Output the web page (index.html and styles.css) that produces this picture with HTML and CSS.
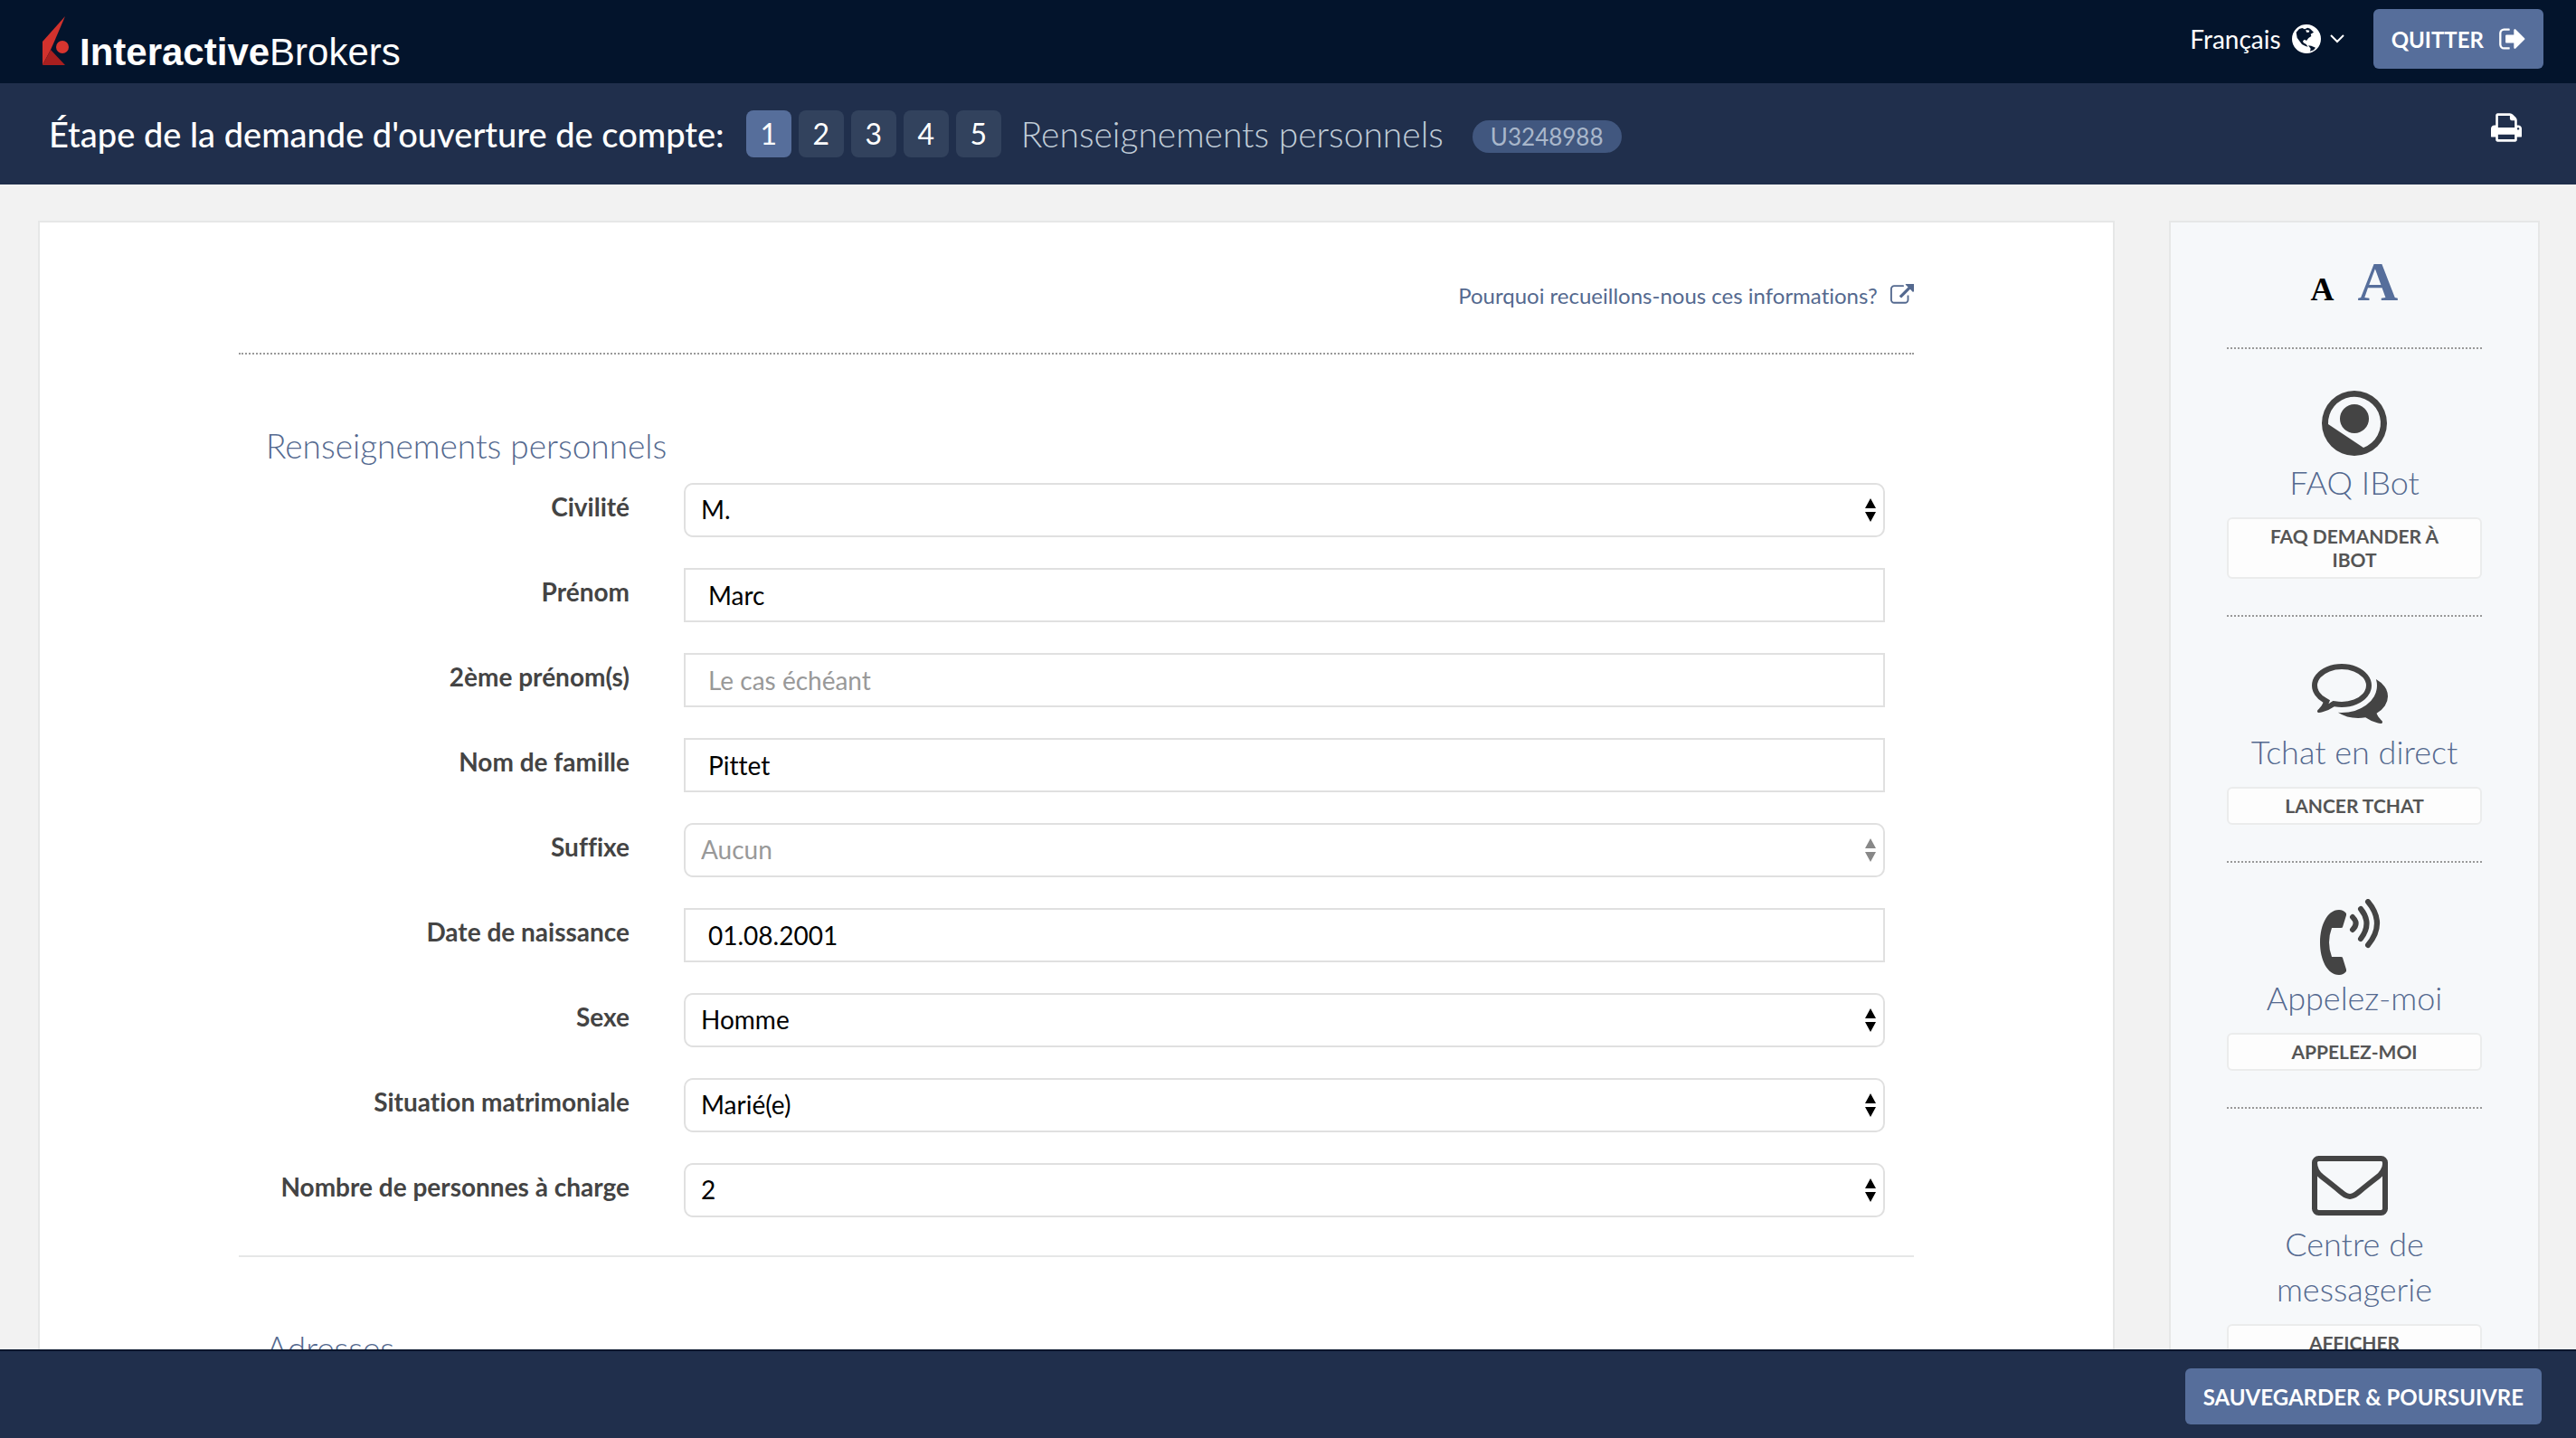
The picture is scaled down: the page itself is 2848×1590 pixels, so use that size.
FILE: index.html
```html
<!DOCTYPE html>
<html lang="fr">
  <head>
    <meta charset="UTF-8" />
    <meta name="viewport" content="width=device-width, initial-scale=1.0" />
    <title>Renseignements personnels - Interactive Brokers</title>
    <link rel="stylesheet" href="styles.css">
  </head>
  <body>
    <header class="topbar">
      <a class="logo" href="#">
        <svg class="logo-mark" viewBox="0 0 30 56" aria-hidden="true">
          <path fill="#d2322d" d="M26 1L1 29v26l9-17 4-9z" />
          <path fill="#a81f1f" d="M1 55l9-17 16 17z" />
          <circle fill="#d8352f" cx="23" cy="35" r="7" />
        </svg>
        <span><b>Interactive</b>Brokers</span>
      </a>
      <div class="topbar-right">
        <button class="language" type="button">
          Français
          <svg class="icon-globe" viewBox="0 0 96 96" aria-hidden="true">
            <path fill="currentColor" fill-rule="evenodd" d="M48 0a48 48 0 1 1 0 96a48 48 0 1 1 0-96zM14 26l10-11 10-3 8 4 10-5 8 3 12 12-10 6 2 7-9 6-7 9-6-4-6 5 2 6 9 5 6 8-8-2-12-6-9-12-7-10zM46 18l2 8 8 0 2-6zM54 70l10 1 14 6-6 8-12 4 2-9z" />
          </svg>
          <svg class="icon-chevron" viewBox="0 0 16 10" aria-hidden="true">
            <path fill="none" stroke="currentColor" stroke-width="2" d="M1 1l7 7 7-7" />
          </svg>
        </button>
        <button class="btn btn-quit" type="button">
          Quitter
          <svg class="icon-out" viewBox="0 256 1664 1280" aria-hidden="true">
            <path fill="currentColor" d="M704 1440q0 4 1 20t.5 26.500-3 23.500-10 19.500-20.500 6.500h-320q-119 0-203.500-84.500t-84.500-203.500v-704q0-119 84.500-203.500t203.500-84.500h320q13 0 22.500 9.500t9.500 22.500q0 4 1 20t.5 26.500-3 23.500-10 19.500-20.500 6.500h-320q-66 0-113 47t-47 113v704q0 66 47 113t113 47h312l11.500 1 11.500 3 8 5.500 7 9 2 13.500zm928-544q0 26-19 45l-544 544q-19 19-45 19t-45-19-19-45v-288h-448q-26 0-45-19t-19-45v-384q0-26 19-45t45-19h448v-288q0-26 19-45t45-19 45 19l544 544q19 19 19 45z" />
          </svg>
        </button>
      </div>
    </header>

    <div class="stepbar">
      <h1>Étape de la demande d'ouverture de compte:</h1>
      <ol class="steps">
        <li class="active">1</li>
        <li>2</li>
        <li>3</li>
        <li>4</li>
        <li>5</li>
      </ol>
      <span class="step-name">Renseignements personnels</span>
      <span class="badge">U3248988</span>
      <button class="print" type="button" aria-label="Imprimer">
        <svg class="icon-print" viewBox="64 128 1664 1536" aria-hidden="true">
          <path fill="currentColor" d="M448 1536h896v-256h-896v256zm0-640h896v-384h-160q-40 0-68-28t-28-68v-160h-640v640zm1152 64q0-26-19-45t-45-19-45 19-19 45 19 45 45 19 45-19 19-45zm128 0v416q0 13-9.500 22.500t-22.500 9.500h-224v160q0 40-28 68t-68 28h-960q-40 0-68-28t-28-68v-160h-224q-13 0-22.500-9.500t-9.500-22.500v-416q0-79 56.500-135.500t135.500-56.500h64v-544q0-40 28-68t68-28h672q40 0 88 20t76 48l152 152q28 28 48 76t20 88v256h64q79 0 135.500 56.500t56.500 135.500z" />
        </svg>
      </button>
    </div>

    <div class="page">
      <main class="card">
        <div class="why">
          <a href="#">
            Pourquoi recueillons-nous ces informations?
            <svg class="icon-external" viewBox="0 64 1792 1472" aria-hidden="true">
              <path fill="currentColor" d="M1408 928v320q0 119-84.500 203.500t-203.500 84.500h-832q-119 0-203.500-84.500t-84.500-203.500v-832q0-119 84.500-203.500t203.500-84.500h704q14 0 23 9t9 23v64q0 14-9 23t-23 9h-704q-66 0-113 47t-47 113v832q0 66 47 113t113 47h832q66 0 113-47t47-113v-320q0-14 9-23t23-9h64q14 0 23 9t9 23zm384-864v512q0 26-19 45t-45 19-45-19l-176-176-652 652q-10 10-23 10t-23-10l-114-114q-10-10-10-23t10-23l652-652-176-176q-19-19-19-45t19-45 45-19h512q26 0 45 19t19 45z" />
            </svg>
          </a>
        </div>

        <form id="application">
          <section class="form-section">
            <h2>Renseignements personnels</h2>
            <div class="row">
              <label for="title">Civilité</label>
              <select id="title"><option>M.</option></select>
            </div>
            <div class="row">
              <label for="first-name">Prénom</label>
              <input id="first-name" type="text" value="Marc" />
            </div>
            <div class="row">
              <label for="middle-name">2ème prénom(s)</label>
              <input id="middle-name" type="text" placeholder="Le cas échéant" />
            </div>
            <div class="row">
              <label for="last-name">Nom de famille</label>
              <input id="last-name" type="text" value="Pittet" />
            </div>
            <div class="row">
              <label for="suffix">Suffixe</label>
              <select id="suffix" class="empty"><option>Aucun</option></select>
            </div>
            <div class="row">
              <label for="birth-date">Date de naissance</label>
              <input id="birth-date" type="text" value="01.08.2001" />
            </div>
            <div class="row">
              <label for="gender">Sexe</label>
              <select id="gender"><option>Homme</option></select>
            </div>
            <div class="row">
              <label for="marital-status">Situation matrimoniale</label>
              <select id="marital-status"><option>Marié(e)</option></select>
            </div>
            <div class="row">
              <label for="dependents">Nombre de personnes à charge</label>
              <select id="dependents"><option>2</option></select>
            </div>
          </section>

          <section class="form-section">
            <h2>Adresses</h2>
          </section>
        </form>
      </main>

      <aside class="sidebar">
        <div class="text-size">
          <button class="size-small" type="button" aria-label="Texte normal">A</button>
          <button class="size-large" type="button" aria-label="Texte agrandi">A</button>
        </div>

        <section class="help">
          <svg class="icon-bot" viewBox="0 0 84 82" aria-hidden="true">
            <path fill="currentColor" fill-rule="evenodd" d="M42 6a36 36 0 1 1 0 72a36 36 0 1 1 0-72zM13 43L52 69A29 29 0 1 0 13 43z" />
            <circle fill="currentColor" cx="42" cy="37" r="16" />
          </svg>
          <h3>FAQ IBot</h3>
          <button class="btn-help" type="button">FAQ demander à IBot</button>
        </section>

        <section class="help">
          <svg class="icon-help" viewBox="0 0 1792 1792" aria-hidden="true">
            <path fill="currentColor" d="M704 384q-153 0-286 52t-211.500 141-78.500 191q0 82 53 158t149 132l97 56-35 84q34-20 62-39l44-31 53 10q78 14 153 14 153 0 286-52t211.500-141 78.500-191-78.500-191-211.500-141-286-52zm0-128q191 0 353.500 68.500t256.500 186.500 94 257-94 257-256.500 186.500-353.500 68.500q-86 0-176-16-124 88-278 128-36 9-86 16h-3q-11 0-20.500-8t-11.500-21q-1-3-1-6.500t.5-6.500 2-6l2.500-5 3.500-5.500 4-5 4.500-5 4-4.500q5-6 23-25t26-29.500 22.500-29 25-38.500 20.500-44q-124-72-195-177t-71-224q0-139 94-257t256.500-186.500 353.500-68.500zm822 1169q10 24 20.500 44t25 38.500 22.500 29 26 29.500 23 25q1 1 4 4.500t4.500 5 4 5 3.500 5.500l2.500 5 2 6 .5 6.500-1 6.500q-3 14-13 22t-22 7q-50-7-86-16-154-40-278-128-90 16-176 16-271 0-472-132 58 4 88 4 161 0 309-45t264-129q125-92 192-212t67-254q0-77-23-152 129 71 204 178t75 230q0 120-71 224.500t-195 176.500z" />
          </svg>
          <h3>Tchat en direct</h3>
          <button class="btn-help" type="button">Lancer Tchat</button>
        </section>

        <section class="help">
          <svg class="icon-help" viewBox="0 0 84 84" aria-hidden="true">
            <path fill="currentColor" d="M30 12q5 0 8 4l0 2-4 13q0 1-2 1l-10 0q-3 8-3 16t3 16l10 0q2 0 2 1l4 13 0 2q-3 4-8 4C17 84 9 67 9 48s8-36 21-36z" />
            <path fill="none" stroke="currentColor" stroke-width="6" stroke-linecap="round" d="M45 20q7 7 0 14M54 11q13 16 0 33M62 3q20 24 0 48" />
          </svg>
          <h3>Appelez-moi</h3>
          <button class="btn-help" type="button">Appelez-moi</button>
        </section>

        <section class="help">
          <svg class="icon-help" viewBox="0 0 1792 1792" aria-hidden="true">
            <path fill="currentColor" d="M1664 1504v-768q-32 36-69 66-268 206-426 338-51 43-83 67t-86.500 48.500-102.500 24.500h-2q-48 0-102.500-24.500t-86.500-48.500-83-67q-158-132-426-338-37-30-69-66v768q0 13 9.500 22.500t22.500 9.500h1472q13 0 22.500-9.500t9.500-22.500zm0-1051v-24.500l-.5-13-3-12.500-5.500-9-9-7.500-14-2.500h-1472q-13 0-22.500 9.500t-9.500 22.500q0 168 147 284 193 152 401 317 6 5 35 29.500t46 37.500 44.500 31.500 50.500 27.500 43 9h2q20 0 43-9t50.500-27.500 44.500-31.500 46-37.500 35-29.500q208-165 401-317 54-43 100.500-115.500t46.500-131.500zm128-37v1088q0 66-47 113t-113 47h-1472q-66 0-113-47t-47-113v-1088q0-66 47-113t113-47h1472q66 0 113 47t47 113z" />
          </svg>
          <h3>Centre de messagerie</h3>
          <button class="btn-help" type="button">Afficher messages</button>
        </section>
      </aside>
    </div>

    <footer class="actions">
      <button class="btn" type="submit" form="application">Sauvegarder &amp; poursuivre</button>
    </footer>
  </body>
</html>
```
FILE: styles.css
```css
* {
  margin: 0;
  padding: 0;
  box-sizing: border-box;
}

body {
  display: flex;
  flex-direction: column;
  height: 100vh;
  overflow: hidden;
  font-family: Lato, "Open Sans", sans-serif;
  font-size: 28px;
  font-variant-ligatures: none;
  color: #444;
  background-color: #f2f2f2;
}

button,
input,
select {
  font-family: inherit;
  font-size: inherit;
  font-variant-ligatures: inherit;
}

button {
  border: none;
  background: none;
  color: inherit;
  cursor: pointer;
}

/* top bar */
.topbar {
  display: flex;
  flex: none;
  align-items: center;
  justify-content: space-between;
  height: 92px;
  padding: 0 36px 6px 46px;
  color: white;
  background-color: #03142c;
}

.logo {
  display: flex;
  align-items: flex-end;
  gap: 12px;
  padding-top: 4px;
  font-family: "Liberation Sans", Arial, sans-serif;
  font-size: 42px;
  line-height: 30px;
  color: white;
  text-decoration: none;
}

.logo-mark {
  width: 30px;
  height: 56px;
}

.topbar-right {
  display: flex;
  align-items: center;
  gap: 32px;
}

.language {
  display: flex;
  align-items: center;
}

.icon-globe {
  width: 32px;
  height: 32px;
  margin: 0 10px 0 12px;
}

.icon-chevron {
  width: 16px;
  height: 10px;
}

.btn {
  display: flex;
  align-items: center;
  height: 62px;
  padding: 0 20px;
  font-size: 24px;
  font-weight: bold;
  text-transform: uppercase;
  color: white;
  background-color: #566e9b;
  border-radius: 6px;
}

.btn-quit {
  gap: 16px;
  height: 66px;
}

.icon-out {
  width: 30px;
  height: 24px;
}

/* step bar */
.stepbar {
  display: flex;
  flex: none;
  align-items: center;
  height: 112px;
  padding: 0 60px 0 54px;
  color: white;
  background-color: #202f4c;
}

.stepbar h1 {
  font-size: 38px;
  font-weight: 500;
}

.steps {
  display: flex;
  gap: 8px;
  margin: 0 22px 0 24px;
  list-style: none;
}

.steps li {
  width: 50px;
  font-size: 32px;
  line-height: 52px;
  text-align: center;
  background-color: #32425d;
  border-radius: 8px;
}

.steps .active {
  background-color: #566e9b;
}

.step-name {
  font-size: 39px;
  font-weight: 300;
  color: #c0cdd8;
}

.badge {
  margin: 6px 0 0 32px;
  padding: 0 20px;
  font-size: 26px;
  line-height: 36px;
  color: #a9b7cb;
  background-color: #41577f;
  border-radius: 18px;
}

.print {
  margin: 0 0 14px auto;
}

.icon-print {
  display: block;
  width: 34px;
  height: 32px;
}

/* content */
.page {
  display: flex;
  flex: 1;
  align-items: flex-start;
  gap: 60px;
  min-height: 0;
  padding: 40px 40px 40px 42px;
  overflow-y: auto;
  scrollbar-width: none;
}

.card {
  flex: 1;
  padding: 58px 220px 100px;
  background-color: white;
  border: 2px solid #e6e7e7;
}

.why {
  padding-bottom: 40px;
  text-align: right;
  border-bottom: 2px dotted #999;
}

.why a {
  font-size: 24px;
  line-height: 46px;
  color: #54698f;
  text-decoration: none;
}

.icon-external {
  width: 26px;
  height: 22px;
  margin-left: 8px;
}

.form-section {
  padding: 76px 30px 42px;
  border-bottom: 2px solid #e6e7e7;
}

.form-section h2,
.help h3 {
  font-size: 36px;
  font-weight: 300;
  line-height: 50px;
  color: #54698f;
}

.form-section h2 {
  margin-bottom: 16px;
  font-size: 37px;
}

.row {
  display: grid;
  grid-template-columns: 402px 1fr;
  column-gap: 60px;
  margin-right: 2px;
  margin-bottom: 34px;
}

.row:last-child {
  margin-bottom: 0;
}

.row label {
  font-weight: bold;
  line-height: 52px;
  text-align: right;
}

.row input,
.row select {
  width: 100%;
  height: 60px;
  color: black;
  background-color: white;
  border: 2px solid #e0e0e0;
}

.row input {
  padding: 0 25px;
}

.row input::placeholder {
  color: #999;
}

.row select {
  padding: 0 40px 2px 17px;
  appearance: none;
  background-image: url("data:image/svg+xml,%3Csvg xmlns='http://www.w3.org/2000/svg' viewBox='0 0 12 26'%3E%3Cpath d='M6 0l6 11H0zM6 26l6-11H0z'/%3E%3C/svg%3E");
  background-repeat: no-repeat;
  background-position: right 8px center;
  background-size: 12px 26px;
  border-radius: 10px;
}

.row .empty {
  color: #999;
  background-image: url("data:image/svg+xml,%3Csvg xmlns='http://www.w3.org/2000/svg' viewBox='0 0 12 26'%3E%3Cpath fill='%23888' d='M6 0l6 11H0zM6 26l6-11H0z'/%3E%3C/svg%3E");
}

/* sidebar */
.sidebar {
  width: 410px;
  padding: 0 62px;
  text-align: center;
  background-color: #f6f8fa;
  border: 2px solid #e6e7e7;
}

.text-size {
  display: flex;
  align-items: baseline;
  justify-content: center;
  gap: 26px;
  height: 140px;
  padding-top: 30px;
  border-bottom: 2px dotted #999;
}

.text-size button {
  font-family: "Liberation Serif", "Times New Roman", serif;
  font-weight: bold;
}

.text-size .size-small {
  font-size: 36px;
  color: black;
}

.text-size .size-large {
  font-size: 62px;
  color: #566e9b;
}

.help {
  padding: 40px 0;
  border-bottom: 2px dotted #999;
}

.help:last-child {
  border-bottom: none;
}

.icon-help,
.icon-bot {
  display: block;
  width: 84px;
  height: 84px;
  margin: 0 auto;
}

.icon-help {
  margin-left: 94px;
}

.icon-bot {
  height: 82px;
}

.btn-help {
  width: 100%;
  margin-top: 14px;
  padding: 6px 40px;
  font-size: 21px;
  font-weight: bold;
  line-height: 26px;
  text-transform: uppercase;
  color: #555;
  background-color: #fdfdfd;
  border: 2px solid #ebecec;
  border-radius: 6px;
}

/* bottom bar */
.actions {
  display: flex;
  flex: none;
  align-items: center;
  justify-content: flex-end;
  height: 98px;
  padding: 4px 38px 0;
  background-color: #202f4c;
  border-top: 2px solid #07152c;
}
```
